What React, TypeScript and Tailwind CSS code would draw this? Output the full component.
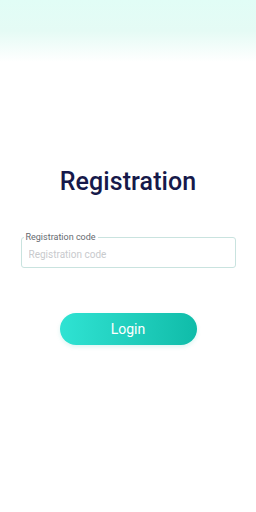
import React from 'react';

export default function App() {
  return (
    <div className="w-[256px] h-[512px] bg-white flex flex-col items-center overflow-hidden" style={{ fontFamily: 'Roboto, "Liberation Sans", sans-serif' }}>
      {/* mint header band */}
      <div className="w-full h-[62px] bg-gradient-to-b from-[#e1fdf6] via-[#e5fbf5] to-white shrink-0" />

      <h1 className="mt-[106px] text-[25px] leading-[28px] font-medium text-[#16194a] tracking-[0.1px]">Registration</h1>

      {/* outlined input */}
      <div className="relative mt-[41px] w-[215px] h-[31px] border border-[#c9e3df] rounded-[3px] flex items-center px-[7px] pt-[3px]">
        <span className="absolute -top-[7px] left-[2px] bg-white px-[2px] text-[9px] leading-[12px] text-[#666a70]">Registration code</span>
        <input
          className="w-full bg-transparent outline-none text-[10px] text-[#555] placeholder:text-[#c8cacd]"
          placeholder="Registration code"
        />
      </div>

      <button className="mt-[45px] w-[137px] h-[32px] rounded-full bg-gradient-to-r from-[#2fe3d3] to-[#0fbca9] text-white text-[14px] font-normal shadow-[0_2px_4px_rgba(16,190,170,0.15)]">
        Login
      </button>
    </div>
  );
}
